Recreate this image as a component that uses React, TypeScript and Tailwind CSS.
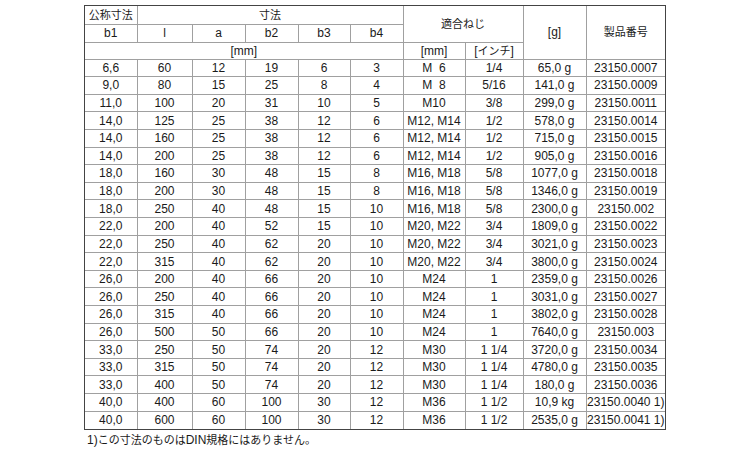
import React from "react";

const rows: string[][] = [
  ["6,6", "60", "12", "19", "6", "3", "M  6", "1/4", "65,0 g", "23150.0007"],
  ["9,0", "80", "15", "25", "8", "4", "M  8", "5/16", "141,0 g", "23150.0009"],
  ["11,0", "100", "20", "31", "10", "5", "M10", "3/8", "299,0 g", "23150.0011"],
  ["14,0", "125", "25", "38", "12", "6", "M12, M14", "1/2", "578,0 g", "23150.0014"],
  ["14,0", "160", "25", "38", "12", "6", "M12, M14", "1/2", "715,0 g", "23150.0015"],
  ["14,0", "200", "25", "38", "12", "6", "M12, M14", "1/2", "905,0 g", "23150.0016"],
  ["18,0", "160", "30", "48", "15", "8", "M16, M18", "5/8", "1077,0 g", "23150.0018"],
  ["18,0", "200", "30", "48", "15", "8", "M16, M18", "5/8", "1346,0 g", "23150.0019"],
  ["18,0", "250", "40", "48", "15", "10", "M16, M18", "5/8", "2300,0 g", "23150.002"],
  ["22,0", "200", "40", "52", "15", "10", "M20, M22", "3/4", "1809,0 g", "23150.0022"],
  ["22,0", "250", "40", "62", "20", "10", "M20, M22", "3/4", "3021,0 g", "23150.0023"],
  ["22,0", "315", "40", "62", "20", "10", "M20, M22", "3/4", "3800,0 g", "23150.0024"],
  ["26,0", "200", "40", "66", "20", "10", "M24", "1", "2359,0 g", "23150.0026"],
  ["26,0", "250", "40", "66", "20", "10", "M24", "1", "3031,0 g", "23150.0027"],
  ["26,0", "315", "40", "66", "20", "10", "M24", "1", "3802,0 g", "23150.0028"],
  ["26,0", "500", "50", "66", "20", "10", "M24", "1", "7640,0 g", "23150.003"],
  ["33,0", "250", "50", "74", "20", "12", "M30", "1 1/4", "3720,0 g", "23150.0034"],
  ["33,0", "315", "50", "74", "20", "12", "M30", "1 1/4", "4780,0 g", "23150.0035"],
  ["33,0", "400", "50", "74", "20", "12", "M30", "1 1/4", "180,0 g", "23150.0036"],
  ["40,0", "400", "60", "100", "30", "12", "M36", "1 1/2", "10,9 kg", "23150.0040 1)"],
  ["40,0", "600", "60", "100", "30", "12", "M36", "1 1/2", "2535,0 g", "23150.0041 1)"],
];

const widths = [52, 55, 53, 53, 52, 53, 62, 58, 63, 79];

const cell = "border border-[#a0a0a0] p-0 text-center align-middle whitespace-pre leading-none font-normal";

function J({ children }: { children: React.ReactNode }) {
  return <span className="text-[11px]">{children}</span>;
}

export default function App() {
  return (
    <div
      className="w-[750px] h-[450px] bg-white text-[#1a1a1a] text-[12px] pt-[5px] pl-[84px]"
      style={{ fontFamily: '"Liberation Sans", Arial, "Noto Sans CJK JP", sans-serif' }}
    >
      <div className="w-[582px] border border-[#444]">
        <table className="w-[580px] table-fixed border-collapse border-hidden">
          <colgroup>
            {widths.map((w, i) => (
              <col key={i} style={{ width: w }} />
            ))}
          </colgroup>
          <thead>
            <tr className="h-[18px]">
              <th className={cell}><J>公称寸法</J></th>
              <th className={cell} colSpan={5}><J>寸法</J></th>
              <th className={cell} colSpan={2} rowSpan={2}><J>適合ねじ</J></th>
              <th className={cell} rowSpan={3}>[g]</th>
              <th className={cell} rowSpan={3}><J>製品番号</J></th>
            </tr>
            <tr className="h-[18px]">
              <th className={cell}>b1</th>
              <th className={cell}>l</th>
              <th className={cell}>a</th>
              <th className={cell}>b2</th>
              <th className={cell}>b3</th>
              <th className={cell}>b4</th>
            </tr>
            <tr className="h-[17px]">
              <th className={cell} colSpan={6}>[mm]</th>
              <th className={cell}>[mm]</th>
              <th className={cell}>[<J>インチ</J>]</th>
            </tr>
          </thead>
          <tbody>
            {rows.map((r, i) => (
              <tr key={i} className="h-[17.62px]">
                {r.map((v, j) => (
                  <td key={j} className={cell}>
                    {v}
                  </td>
                ))}
              </tr>
            ))}
          </tbody>
        </table>
      </div>
      <div className="mt-[3px] pl-[3px] leading-[14px]">
        1)<J>この寸法のものは</J>DIN<J>規格にはありません。</J>
      </div>
    </div>
  );
}
